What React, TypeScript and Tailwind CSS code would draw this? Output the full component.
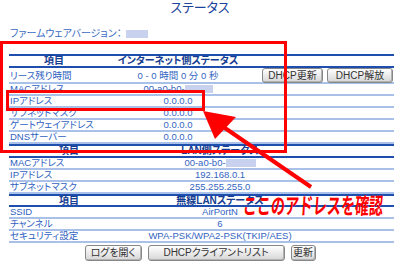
import React from "react";

const lbl = "pl-[1px] text-[#2f5fbf] whitespace-nowrap";
const val = "text-center text-[#3465c2] whitespace-nowrap";
const head = "text-center font-bold text-[10px] text-[#143c90] whitespace-nowrap";
const btn =
  "h-[15px] rounded-[3px] border border-[#878787] bg-linear-to-b from-white to-[#d6d6d6] text-[10px] leading-none text-[#333] shadow-[inset_-1px_-1px_0_#b3b3b3] whitespace-nowrap";

function Blur({ w }: { w: string }) {
  return <span className={`inline-block h-[8px] align-middle bg-[#c8d2ee] ${w}`}></span>;
}

function Row({ grid, label, children, extra }: { grid: string; label: string; children?: React.ReactNode; extra?: React.ReactNode }) {
  return (
    <div className={`${grid} h-[12px] items-center border-b-2 border-[#a9c1e9] leading-[10px]`}>
      <div className={lbl}>{label}</div>
      <div className={val}>{children}</div>
      <div>{extra}</div>
    </div>
  );
}

function Head({ grid, title, h }: { grid: string; title: string; h: string }) {
  return (
    <div className={`${grid} ${h} items-center border-y-2 border-[#1f4fae] leading-[10px]`}>
      <div className={head}>項目</div>
      <div className={head}>{title}</div>
      <div></div>
    </div>
  );
}

export default function App() {
  const g1 = "grid grid-cols-[90px_158px_137px]";
  const g2 = "grid grid-cols-[120px_182px_83px]";
  return (
    <div className="relative w-[400px] h-[264px] overflow-hidden bg-white font-['Liberation_Sans','Noto_Sans_CJK_JP',sans-serif] [font-feature-settings:'palt'] text-[9.5px]">
      <div className="h-[16px] text-center text-[13px] leading-[16px] text-[#1b449a]">ステータス</div>
      <div className="mt-[13px] ml-[10px] flex h-[10px] items-center gap-[4px] text-[10px] leading-[10px] text-[#3a6ac4]">
        <span>ファームウェアバージョン：</span>
        <Blur w="w-[22px]" />
      </div>

      <div className="mt-[15px] ml-[9px] w-[385px]">
        <Head grid={g1} title="インターネット側ステータス" h="h-[14px]" />
        <div className={`${g1} h-[16px] border-b-2 border-[#a9c1e9] leading-[10px]`}>
          <div className={`${lbl} self-center`}>リース残り時間</div>
          <div className={`${val} self-center`}>0 - 0 時間 0 分 0 秒</div>
          <div className="flex gap-[4px] pl-[5px]">
            <button className={`${btn} w-[61px]`}>DHCP更新</button>
            <button className={`${btn} w-[66px]`}>DHCP解放</button>
          </div>
        </div>
        <Row grid={g1} label="MACアドレス">
          00-a0-b0-<Blur w="w-[28px]" />
        </Row>
        <Row grid={g1} label="IPアドレス">0.0.0.0</Row>
        <Row grid={g1} label="サブネットマスク">0.0.0.0</Row>
        <Row grid={g1} label="ゲートウェイアドレス">0.0.0.0</Row>
        <Row grid={g1} label="DNSサーバー">0.0.0.0</Row>

        <Head grid={g2} title="LAN側ステータス" h="h-[14px]" />
        <Row grid={g2} label="MACアドレス">
          00-a0-b0-<Blur w="w-[30px]" />
        </Row>
        <Row grid={g2} label="IPアドレス">192.168.0.1</Row>
        <Row grid={g2} label="サブネットマスク">255.255.255.0</Row>

        <Head grid={g2} title="無線LANステータス" h="h-[13px]" />
        <Row grid={g2} label="SSID">AirPortN</Row>
        <Row grid={g2} label="チャンネル">6</Row>
        <Row grid={g2} label="セキュリティ設定">WPA-PSK/WPA2-PSK(TKIP/AES)</Row>
      </div>

      <div className="mt-[2px] flex justify-center gap-[6px]">
        <button className={`${btn} h-[16px] w-[57px]`}>ログを開く</button>
        <button className={`${btn} h-[16px] w-[137px]`}>DHCPクライアントリスト</button>
        <button className={`${btn} h-[16px] w-[25px]`}>更新</button>
      </div>

      {/* annotations */}
      <div className="pointer-events-none absolute left-0 top-[41px] h-[112px] w-[287px] border-[3px] border-[#ff0000]"></div>
      <div className="pointer-events-none absolute left-[6px] top-[90px] h-[21px] w-[199px] border-[3px] border-[#ff0000]"></div>
      <svg className="pointer-events-none absolute left-0 top-0" width="400" height="264" viewBox="0 0 400 264">
        <line x1="222" y1="126" x2="311" y2="187" stroke="#ff0000" strokeWidth="4" />
        <polygon points="203,111 236,117 215,139" fill="#ff0000" />
      </svg>
      <span className="pointer-events-none absolute left-[243px] top-[198px] text-[14px] font-bold leading-[16px] text-[#ff0000] scale-y-[1.6] -skew-x-6 [font-feature-settings:normal]">
        ここのアドレスを確認
      </span>
    </div>
  );
}
